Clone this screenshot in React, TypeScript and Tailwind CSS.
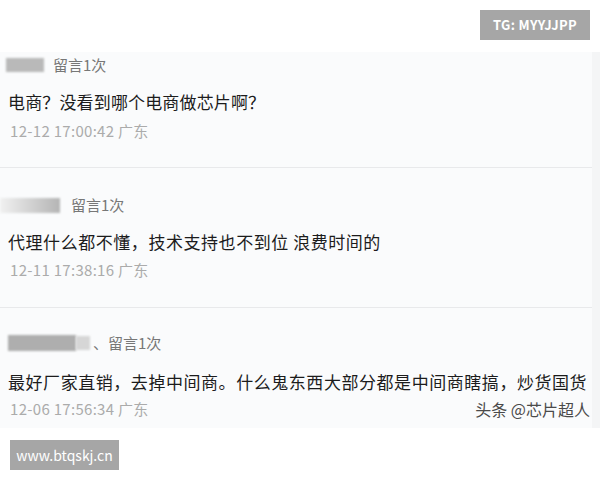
import React from "react"

const font = { fontFamily: '"Noto Sans CJK SC", "Noto Sans", sans-serif' }

function NameRow({ children }: { children: React.ReactNode }) {
  return <div className="flex h-5 items-center">{children}</div>
}

function Comment({ text, wide }: { text: string; wide?: boolean }) {
  return (
    <p
      className={
        wide
          ? "h-6 pl-[8px] text-[17px] leading-6 tracking-[0.55px] whitespace-nowrap text-[#1c1c1c]"
          : "h-6 pl-[8px] text-[17px] leading-6 tracking-[0.15px] whitespace-nowrap text-[#1c1c1c]"
      }
    >
      {text}
    </p>
  )
}

function Time({ text, mark }: { text: string; mark?: boolean }) {
  return (
    <div className="flex h-5 items-center justify-between pl-[10px] pr-[2px]">
      <span className="text-[15px] leading-5 tracking-[0.3px] text-[#ababab]">{text}</span>
      {mark && <span className="text-[16px] leading-5 text-[#4a4a4a]">头条 @芯片超人</span>}
    </div>
  )
}

export default function App() {
  return (
    <div className="flex h-[480px] w-[600px] flex-col bg-white" style={font}>
      {/* top bar with badge */}
      <div className="flex h-[52px] justify-end pr-[10px] pt-[10px]">
        <div className="flex h-[30px] w-[110px] items-center justify-center bg-[#a6a6a6] text-[13px] font-semibold tracking-wide text-white">
          TG: MYYJJPP
        </div>
      </div>

      {/* comment screenshot */}
      <div className="flex flex-col border-r-[8px] border-r-[#f4f5f6] bg-[#fafbfc]">
        <section className="flex h-[115px] flex-col pt-[3px]">
          <NameRow>
            <div className="ml-[6px] h-[14px] w-[38px] bg-[#b9b9b9] blur-[1px]" />
            <span className="ml-[9px] text-[15px] text-[#777]">留言1次</span>
          </NameRow>
          <div className="h-[15px]" />
          <Comment text="电商？没看到哪个电商做芯片啊？" />
          <div className="h-[7px]" />
          <Time text="12-12 17:00:42 广东" />
        </section>

        <div className="h-px bg-[#e8e9eb]" />

        <section className="flex h-[139px] flex-col pt-[27px]">
          <NameRow>
            <div className="h-[15px] w-[60px] bg-gradient-to-r from-[#f1f1f1] to-[#b5b5b5] blur-[1px]" />
            <span className="ml-[11px] text-[15px] text-[#777]">留言1次</span>
          </NameRow>
          <div className="h-[15px]" />
          <Comment text="代理什么都不懂，技术支持也不到位 浪费时间的" wide />
          <div className="h-[6px]" />
          <Time text="12-11 17:38:16 广东" />
        </section>

        <div className="h-px bg-[#e8e9eb]" />

        <section className="flex h-[120px] flex-col pt-[25px]">
          <NameRow>
            <div className="ml-[8px] h-[16px] w-[68px] bg-[#aeaeae] blur-[1px]" />
            <div className="h-[14px] w-[14px] bg-[#d6d6d6] blur-[1px]" />
            <span className="ml-[3px] text-[15px] text-[#777]">、留言1次</span>
          </NameRow>
          <div className="h-[17px]" />
          <Comment text="最好厂家直销，去掉中间商。什么鬼东西大部分都是中间商瞎搞，炒货国货" wide />
          <div className="h-[5px]" />
          <Time text="12-06 17:56:34 广东" mark />
        </section>
      </div>

      {/* bottom badge */}
      <div className="pl-[10px] pt-[12px]">
        <div className="flex h-[30px] w-[109px] items-center justify-center bg-[#a6a6a6] text-[14px] text-white">
          www.btqskj.cn
        </div>
      </div>
    </div>
  )
}
